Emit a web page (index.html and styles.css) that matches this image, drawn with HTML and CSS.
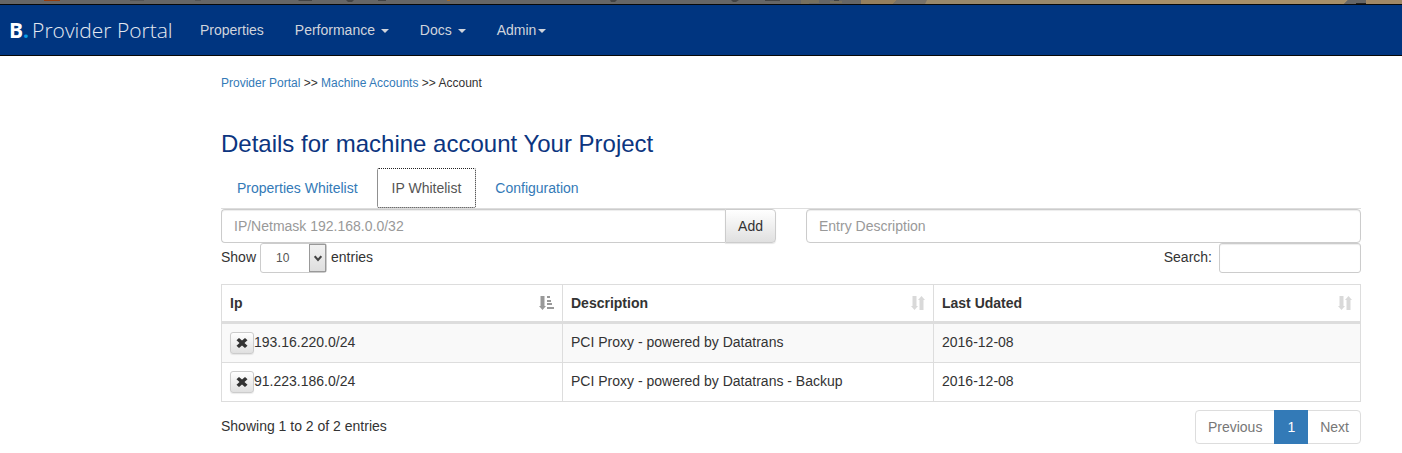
FILE: index.html
```html
<!DOCTYPE html>
<html lang="en">
<head>
<meta charset="utf-8">
<title>Provider Portal - Machine Account</title>
<meta name="viewport" content="width=device-width, initial-scale=1">
<link rel="stylesheet" href="styles.css">
</head>
<body>
<svg class="strip" viewBox="0 0 1402 4" preserveAspectRatio="none" aria-hidden="true">
  <rect width="1402" height="4" fill="#666"/>
  <path fill="#963c0c" d="M44 0h16v1H44z"/>
  <path fill="#555" d="M130 0h14v1h-14zM195 0h6v1h-6z"/>
  <path fill="#444" d="M298 0h14v1h-13zM346 0h8l-2 2h-4zM378 0h8v1h-8zM610 0h7l-2 2h-4zM731 0h8l-3 2h-3zM765 0h15v1h-15zM834 0h5v1h-5z"/>
  <path fill="#a06828" d="M447 0h3v1h-3z"/>
  <path fill="#76705f" d="M801 0h18v3h-10v1h-8zM830 1h12v2h-12z"/>
  <path fill="#947f5e" d="M861 0h36l-4 4h-32z"/>
  <path fill="#77726a" d="M897 0h30v4h-34z"/>
  <path fill="#97886c" d="M927 0h193v4H925z"/>
  <path fill="#a68f69" d="M1120 0h228l-4 4h-224z"/>
  <path fill="#666" d="M1348 0h18v4h-22z"/>
  <path fill="#222" d="M1356 3h10v1h-10z"/>
  <path fill="#a08866" d="M1366 0h36v4h-36z"/>
</svg>
<header class="navbar">
  <a class="brand" href="#"><span class="brand-mark">B<span class="brand-dot">.</span></span><span>Provider Portal</span></a>
  <nav class="nav">
    <a href="#">Properties</a>
    <a href="#">Performance <span class="caret"></span></a>
    <a href="#">Docs <span class="caret"></span></a>
    <a href="#">Admin<span class="caret"></span></a>
  </nav>
</header>
<main class="content">
  <nav class="breadcrumb"><a href="#">Provider Portal</a> &gt;&gt; <a href="#">Machine Accounts</a> &gt;&gt; Account</nav>
  <h1 class="title">Details for machine account Your Project</h1>
  <nav class="tabs">
    <a class="tab" href="#">Properties Whitelist</a>
    <a class="tab active" href="#">IP Whitelist</a>
    <a class="tab" href="#">Configuration</a>
  </nav>
  <form class="entry">
    <div class="input-group">
      <input class="control" type="text" placeholder="IP/Netmask 192.168.0.0/32" aria-label="IP or netmask">
      <button class="add" type="button">Add</button>
    </div>
    <input class="control" type="text" placeholder="Entry Description" aria-label="Entry description">
  </form>
  <div class="tools">
    <label class="length">Show
      <span class="select-wrap">
        <select class="select"><option>10</option><option>25</option><option>50</option></select>
        <span class="select-arrow"><svg width="8" height="7" viewBox="0 0 8 7" aria-hidden="true"><path d="M.7 1.2L4 5l3.300-3.800" fill="none" stroke="#444" stroke-width="2"/></svg></span>
      </span>
      entries</label>
    <label class="search">Search: <input class="control small" type="search"></label>
  </div>
  <table class="table">
    <colgroup><col class="col-ip"><col class="col-desc"><col></colgroup>
    <thead>
      <tr>
        <th><div class="head">Ip
          <svg class="sort sorted" width="15" height="14" viewBox="0 0 15 14" aria-hidden="true"><path d="M1.500 0h4v10H7l-3.500 4L0 10h1.500zM8 0h3v2H8zM8 4h4v2H8zM8 7h5v2H8zM8 11h7v2H8z"/></svg></div></th>
        <th><div class="head">Description
          <svg class="sort" width="14" height="14" viewBox="0 0 14 14" aria-hidden="true"><path d="M1.500 0h4v10H7l-3.500 4L0 10h1.500zM8.500 14h4V4H14l-3.500-4L7 4h1.500z"/></svg></div></th>
        <th><div class="head">Last Udated
          <svg class="sort" width="14" height="14" viewBox="0 0 14 14" aria-hidden="true"><path d="M1.500 0h4v10H7l-3.500 4L0 10h1.500zM8.500 14h4V4H14l-3.500-4L7 4h1.500z"/></svg></div></th>
      </tr>
    </thead>
    <tbody>
      <tr>
        <td><div class="ip"><button class="remove" type="button" aria-label="Remove 193.16.220.0/24"><svg width="12" height="10" viewBox="0 0 12 10" aria-hidden="true"><path d="M3 0l3 2.500L9 0l2.500 2.300L8.500 5l3 2.700L9 10 6 7.500 3 10 .5 7.700 3.500 5 .5 2.300z"/></svg></button><span>193.16.220.0/24</span></div></td>
        <td>PCI Proxy - powered by Datatrans</td>
        <td>2016-12-08</td>
      </tr>
      <tr>
        <td><div class="ip"><button class="remove" type="button" aria-label="Remove 91.223.186.0/24"><svg width="12" height="10" viewBox="0 0 12 10" aria-hidden="true"><path d="M3 0l3 2.500L9 0l2.500 2.300L8.500 5l3 2.700L9 10 6 7.500 3 10 .5 7.700 3.500 5 .5 2.300z"/></svg></button><span>91.223.186.0/24</span></div></td>
        <td>PCI Proxy - powered by Datatrans - Backup</td>
        <td>2016-12-08</td>
      </tr>
    </tbody>
  </table>
  <footer class="foot">
    <span>Showing 1 to 2 of 2 entries</span>
    <nav class="pages">
      <a href="#">Previous</a>
      <a class="current" href="#">1</a>
      <a href="#">Next</a>
    </nav>
  </footer>
</main>
</body>
</html>
```
FILE: styles.css
```css
* { box-sizing: border-box; }
body {
  margin: 0;
  background: #fff;
  color: #333;
  font: 14px/20px "Liberation Sans", Arial, sans-serif;
}
a { color: #337ab7; text-decoration: none; }
input, select, button { font: inherit; color: inherit; margin: 0; }

.strip { display: block; width: 100%; height: 4px; }
.navbar {
  display: flex;
  align-items: center;
  height: 52px;
  background: #003580;
  border-top: 1px solid #080808;
  border-bottom: 1px solid #080808;
}
.brand {
  display: flex;
  align-items: baseline;
  gap: 3px;
  width: 176px;
  margin-left: 9px;
  color: #e4e9f1;
  font: 300 21px/22px "Open Sans", sans-serif;
  white-space: nowrap;
}
.brand-mark { color: #fff; font-weight: 700; }
.brand-dot { color: #0a9fe8; }
.nav { display: flex; gap: 1px; }
.nav a { padding: 15px; color: #d0d4dc; white-space: nowrap; }
.caret {
  display: inline-block;
  margin-left: 2px;
  vertical-align: middle;
  border-top: 4px solid;
  border-left: 4px solid transparent;
  border-right: 4px solid transparent;
}

.content { padding: 17px 41px 8px 221px; }
.breadcrumb { font-size: 12px; }
.title {
  margin: 37px 0 11px;
  color: #0c3580;
  font-size: 24px;
  font-weight: 400;
  line-height: 27px;
}
.tabs { display: flex; gap: 3px; border-bottom: 1px solid #ddd; }
.tab { padding: 10px 16px; height: 40px; line-height: 20px; }
.tab.active { padding: 9px 14px; border: 1px dotted #222; border-radius: 2px; color: #555; }

.entry { display: grid; grid-template-columns: 1fr 1fr; gap: 30px; }
.input-group { display: flex; }
.control {
  width: 100%;
  min-width: 0;
  height: 34px;
  padding: 6px 12px;
  border: 1px solid #ccc;
  border-radius: 4px;
  background: #fff;
  box-shadow: inset 0 1px 1px rgba(0, 0, 0, .075);
}
.control::placeholder { color: #999; opacity: 1; }
.input-group .control { border-radius: 4px 0 0 4px; border-right: 0; }
.add {
  flex: none;
  padding: 6px 12px;
  border: 1px solid #ccc;
  border-radius: 0 4px 4px 0;
  background: linear-gradient(#fff, #e0e0e0);
  box-shadow: 0 1px 1px rgba(0, 0, 0, .1);
}

.tools { display: flex; justify-content: space-between; margin-bottom: 11px; }
.length, .search { display: flex; align-items: flex-start; gap: 3px; line-height: 28px; }
.length { gap: 4px; }
.select-wrap { display: flex; position: relative; }
.select {
  appearance: none;
  width: 67px;
  height: 30px;
  padding: 4px 15px;
  border: 1px solid #ccc;
  border-radius: 3px;
  background: #fff;
  color: #555;
  font-size: 12px;
  line-height: 20px;
}
.select-arrow {
  position: absolute;
  inset: 1px 1px 1px auto;
  display: flex;
  align-items: center;
  justify-content: center;
  width: 17px;
  border: 1px solid #999;
  background: linear-gradient(#f2f2f2, #dedede);
  pointer-events: none;
}
.search { gap: 7px; }
.control.small { width: 142px; height: 30px; border-radius: 3px; }

.table {
  width: 100%;
  table-layout: fixed;
  border-collapse: separate;
  border-spacing: 0;
  border: solid #ddd;
  border-width: 1px 0 0 1px;
}
.col-ip { width: 341px; }
.col-desc { width: 371px; }
.table th, .table td {
  padding: 8px 8px 10px;
  border: solid #ddd;
  border-width: 0 1px 1px 0;
  text-align: left;
}
.table th { padding: 8px; border-bottom-width: 3px; }
.table tbody tr:first-child { background: #f9f9f9; }
.head { display: flex; align-items: center; justify-content: space-between; }
.sort { fill: #d9d9d9; }
.sorted { fill: #999; }
.ip { display: flex; align-items: flex-start; height: 20px; }
.remove {
  display: flex;
  align-items: center;
  justify-content: center;
  width: 24px;
  height: 22px;
  padding: 0;
  border: 1px solid #ccc;
  border-radius: 3px;
  background: linear-gradient(#fff, #e0e0e0);
  box-shadow: 0 1px 1px rgba(0, 0, 0, .08);
}
.remove svg { fill: #333; }

.foot { display: flex; justify-content: space-between; margin-top: 8px; }
.foot > span { padding-top: 6px; }
.pages { display: flex; border: 1px solid #ddd; border-radius: 4px; }
.pages a { padding: 6px 12px; color: #777; }
.pages a:last-child { padding-right: 11px; }
.pages .current { margin: -1px 0; padding: 7px 13px; background: #337ab7; color: #fff; }
```
